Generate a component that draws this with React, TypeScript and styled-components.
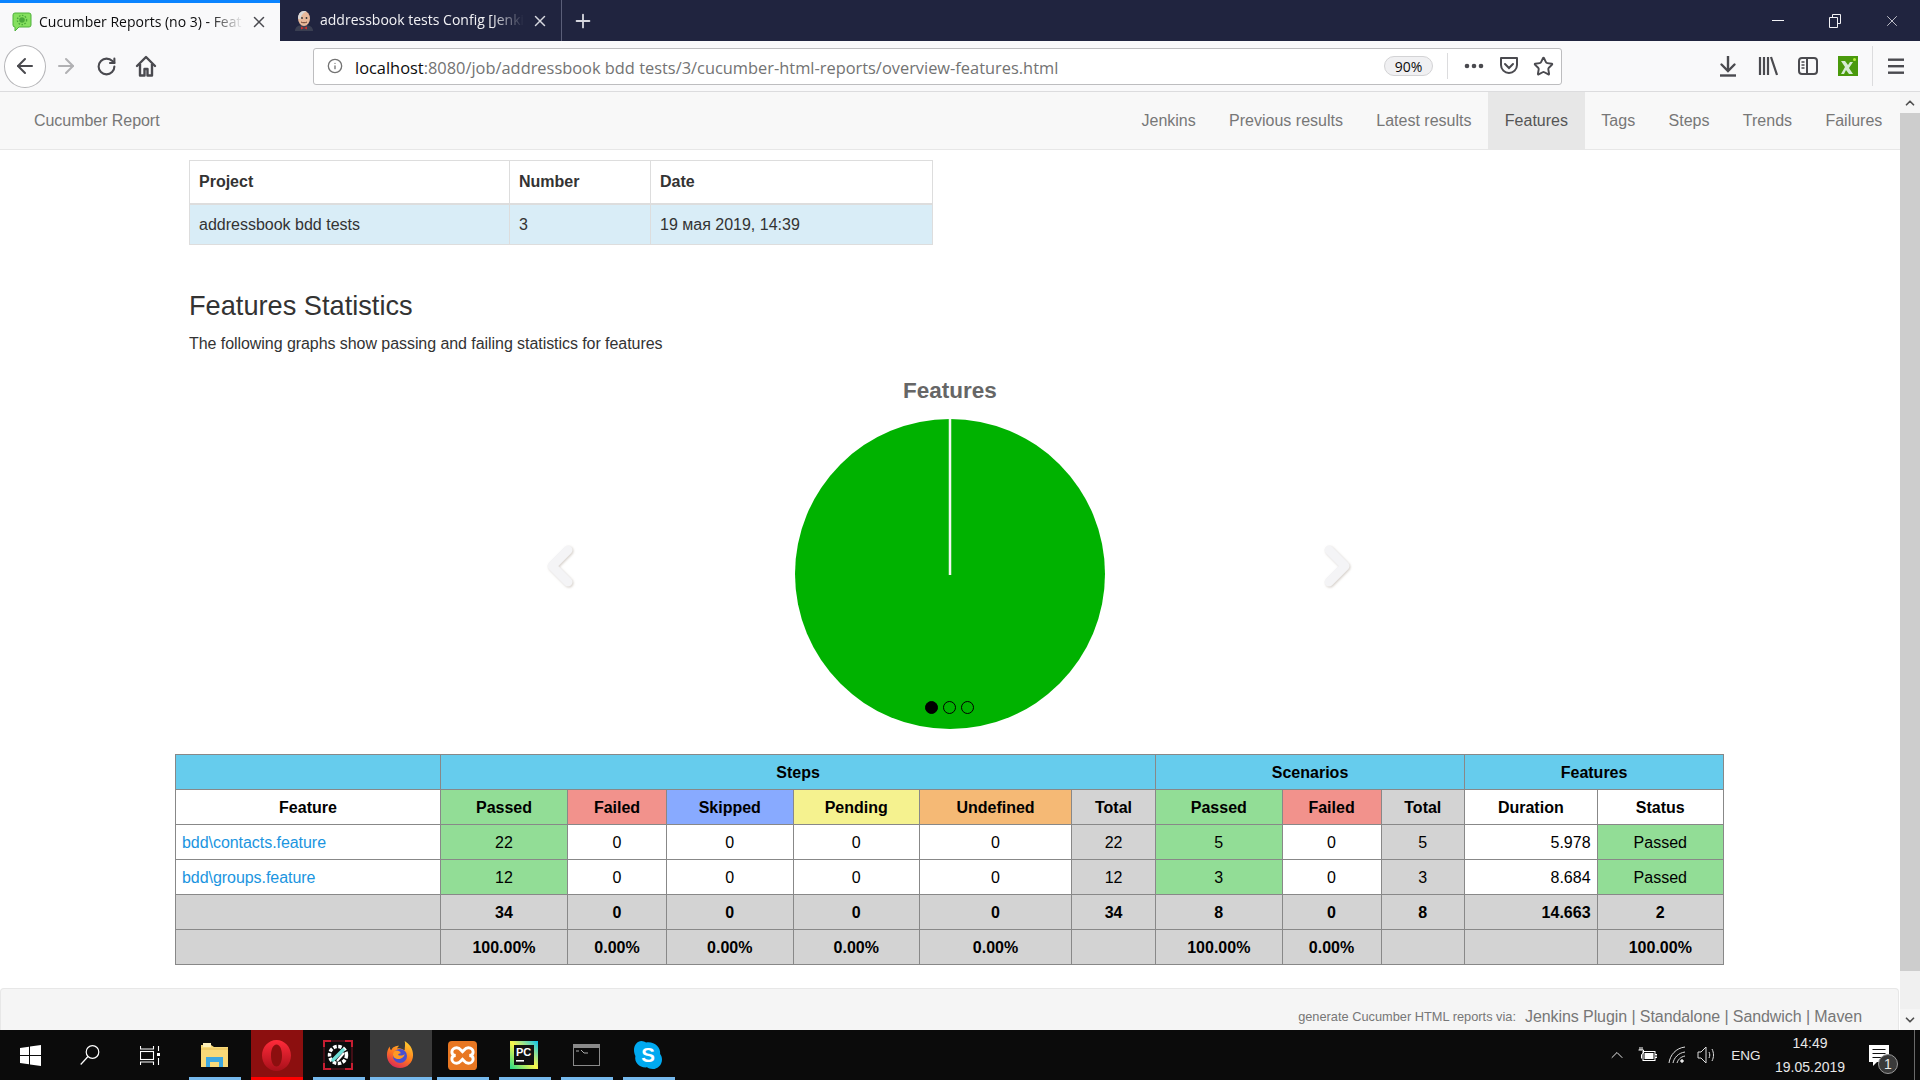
import React from "react";
import styled, { createGlobalStyle } from "styled-components";
import { ArrowLeft, ArrowRight, RotateCw, Info, Star, X, Plus, ChevronUp, ChevronDown } from "lucide-react";

const Global = createGlobalStyle`
  html, body { margin: 0; padding: 0; height: 100%; overflow: hidden; background: #fff; }
  body { font-family: "Liberation Sans", Arial, sans-serif; font-size: 16px; color: #333; }
  * { box-sizing: border-box; }
`;

const UI_FONT = `"Open Sans", "Noto Sans", sans-serif`;

const Screen = styled.div`
  width: 1920px;
  height: 1080px;
  display: flex;
  flex-direction: column;
  overflow: hidden;
`;

/* browser chrome */
const TabBar = styled.div`
  height: 41px;
  background: #20243f;
  display: flex;
  align-items: stretch;
  flex-shrink: 0;
`;

const Tab = styled.div<{ $active?: boolean }>`
  width: ${(p) => (p.$active ? 280 : 282)}px;
  display: flex;
  align-items: center;
  padding-left: ${(p) => (p.$active ? 12 : 15)}px;
  padding-right: 12px;
  gap: 7px;
  background: ${(p) => (p.$active ? "#f9f9fa" : "transparent")};
  border-top: ${(p) => (p.$active ? "3px solid #0a84ff" : "none")};
  border-right: ${(p) => (p.$active ? "none" : "1px solid #5a5e78")};
  color: ${(p) => (p.$active ? "#0c0c0d" : "#f2f2f5")};
  font-family: ${UI_FONT};
  font-size: 14px;
`;

const TabTitle = styled.span`
  flex: 1;
  white-space: nowrap;
  overflow: hidden;
  padding-bottom: 2px;
  mask-image: linear-gradient(to right, #000 84%, transparent 100%);
`;

const NewTab = styled.div`
  width: 42px;
  display: flex;
  align-items: center;
  justify-content: center;
  color: #d6d7df;
`;

const WindowControls = styled.div`
  margin-left: auto;
  display: flex;
  align-items: center;
  color: #f2f2f5;
`;

const WindowButton = styled.div`
  width: 57px;
  display: flex;
  justify-content: center;
  align-items: center;
`;

const Toolbar = styled.div`
  height: 51px;
  background: #f9f9fa;
  border-bottom: 1px solid #dcdcde;
  display: flex;
  align-items: center;
  padding-left: 4px;
  flex-shrink: 0;
`;

const BackButton = styled.div`
  width: 42px;
  height: 43px;
  border-radius: 50%;
  background: #fff;
  border: 1px solid #b5b5b8;
  display: flex;
  align-items: center;
  justify-content: center;
  color: #4a4a4f;
`;

const ToolSlot = styled.div<{ $dim?: boolean }>`
  width: 40px;
  display: flex;
  align-items: center;
  justify-content: center;
  color: ${(p) => (p.$dim ? "#b1b1b3" : "#4a4a4f")};
`;

const UrlBar = styled.div`
  width: 1249px;
  height: 37px;
  margin-left: 147px;
  margin-right: 146px;
  background: #fff;
  border: 1px solid #bdbdbf;
  border-radius: 3px;
  display: flex;
  align-items: center;
  padding-left: 13px;
  font-family: ${UI_FONT};
  font-size: 16.4px;
  color: #737373;
  flex-shrink: 0;
`;

const UrlText = styled.span`
  margin-left: 12px;
  padding-top: 2px;
  white-space: nowrap;
  b {
    font-weight: 400;
    color: #0c0c0d;
  }
`;

const ZoomPill = styled.span`
  margin-left: auto;
  width: 49px;
  height: 20px;
  border: 1px solid #d3d3d5;
  border-radius: 10px;
  background: #f0f0f2;
  color: #0c0c0d;
  font-size: 14px;
  display: flex;
  align-items: center;
  justify-content: center;
`;

const UrlDivider = styled.span`
  width: 1px;
  height: 26px;
  background: #dcdcde;
  margin: 0 8px 0 14px;
`;

const UrlAction = styled.span`
  width: 35px;
  display: flex;
  justify-content: center;
  color: #4a4a4f;
`;

const ToolDivider = styled.span`
  width: 1px;
  height: 40px;
  background: #dcdcde;
  margin: 0 3px 0 4px;
`;

const Viewport = styled.div`
  flex: 1;
  display: flex;
  min-height: 0;
`;

/* report page */
const Page = styled.div`
  flex: 1;
  display: flex;
  flex-direction: column;
  min-width: 0;
`;

const Navbar = styled.nav`
  height: 58px;
  background: #f8f8f8;
  border-bottom: 1px solid #e7e7e7;
  display: flex;
  align-items: stretch;
  padding-left: 34px;
  padding-right: 1px;
  flex-shrink: 0;
`;

const Brand = styled.div`
  color: #777;
  display: flex;
  align-items: center;
  margin-right: auto;
  letter-spacing: -0.05px;
`;

const NavItem = styled.div<{ $active?: boolean }>`
  padding: 0 16.7px;
  display: flex;
  align-items: center;
  color: ${(p) => (p.$active ? "#555" : "#777")};
  background: ${(p) => (p.$active ? "#e7e7e7" : "transparent")};
`;

const Main = styled.main`
  width: 1549px;
  margin-left: 175px;
  padding-top: 10px;
`;

const ProjectTable = styled.table`
  width: 743px;
  margin-left: 14px;
  border-collapse: collapse;
  table-layout: fixed;
`;

const ProjectHead = styled.th`
  height: 43px;
  padding: 0 9px;
  text-align: left;
  border: 1px solid #ddd;
  border-bottom-width: 2px;
  color: #333;
`;

const ProjectCell = styled.td`
  height: 41px;
  padding: 1px 9px 0;
  border: 1px solid #ddd;
  background: #d9edf7;
`;

const Heading = styled.h2`
  margin: 46px 0 12px 14px;
  font-size: 27.2px;
  font-weight: 400;
  line-height: 30px;
  color: #333;
`;

const Lead = styled.p`
  margin: 0 0 0 14px;
  line-height: 22px;
  letter-spacing: -0.06px;
`;

const Carousel = styled.div`
  position: relative;
  margin-top: 20px;
  padding-left: 1px;
  display: flex;
  flex-direction: column;
  align-items: center;
`;

const ChartTitle = styled.div`
  height: 30px;
  line-height: 32px;
  font-size: 22.5px;
  font-weight: 700;
  color: #666;
  margin-bottom: 14px;
`;

const Arrow = styled.svg<{ $side: "left" | "right" }>`
  position: absolute;
  top: 170px;
  left: ${(p) => (p.$side === "left" ? 371 : 1148)}px;
  filter: drop-shadow(1px 1px 1px rgba(120, 100, 80, 0.3));
`;

const Dots = styled.div`
  position: absolute;
  top: 326px;
  left: 0;
  right: 0;
  display: flex;
  justify-content: center;
  gap: 5px;
`;

const Dot = styled.span<{ $on?: boolean }>`
  width: 13px;
  height: 13px;
  border-radius: 50%;
  border: 1px solid #000;
  background: ${(p) => (p.$on ? "#000" : "transparent")};
`;

const StatsTable = styled.table`
  width: 1548px;
  margin-top: 25px;
  border-collapse: collapse;
  table-layout: fixed;
`;

const Col = styled.col<{ $w: number }>`
  width: ${(p) => p.$w}px;
`;

const Cell = styled.td<{ $bg?: string; $bold?: boolean; $align?: string }>`
  height: 35px;
  padding: 1px 6px 0;
  border: 1px solid #888;
  color: #000;
  background: ${(p) => p.$bg || "#fff"};
  font-weight: ${(p) => (p.$bold ? 700 : 400)};
  text-align: ${(p) => p.$align || "center"};
`;

const FeatureLink = styled.a`
  color: #1b95e0;
  letter-spacing: -0.05px;
`;

const Footer = styled.footer`
  margin-top: auto;
  height: 42px;
  background: #f5f5f5;
  border: 1px solid #e7e7e7;
  border-bottom: none;
  border-radius: 4px 4px 0 0;
  margin-right: 1px;
  display: flex;
  align-items: center;
  justify-content: flex-end;
  padding: 14px 36px 0 0;
  color: #777;
  letter-spacing: -0.08px;
`;

const FooterNote = styled.span`
  font-size: 12.8px;
  margin-right: 9px;
  letter-spacing: 0;
`;

const Scrollbar = styled.div`
  width: 20px;
  background: #f0f0f0;
  display: flex;
  flex-direction: column;
  align-items: center;
  flex-shrink: 0;
`;

const ScrollButton = styled.div`
  height: 21px;
  width: 100%;
  display: flex;
  align-items: center;
  justify-content: center;
  background: #f5f5f5;
  color: #505050;
`;

const ScrollThumb = styled.div`
  width: 100%;
  height: 858px;
  background: #cdcdcd;
`;

const ScrollGap = styled.div`
  flex: 1;
`;

/* taskbar */
const Taskbar = styled.div`
  height: 50px;
  background: #0b0b0b;
  display: flex;
  align-items: stretch;
  flex-shrink: 0;
  color: #fff;
`;

const SystemButtons = styled.div`
  display: flex;
  padding-right: 4px;
`;

const SystemButton = styled.div`
  width: 60px;
  display: flex;
  align-items: center;
  justify-content: center;
`;

const TaskSlot = styled.div<{ $state: "open" | "focus" | "current" }>`
  position: relative;
  width: 62px;
  display: flex;
  align-items: center;
  justify-content: center;
  flex-shrink: 0;
  &::before {
    content: "";
    position: absolute;
    top: 0;
    bottom: 0;
    left: ${(p) => (p.$state === "current" ? 0 : 5)}px;
    right: ${(p) => (p.$state === "current" ? 0 : 5)}px;
    background: ${(p) => (p.$state === "focus" ? "#8c0f0f" : p.$state === "current" ? "#3a3a3a" : "transparent")};
  }
  &::after {
    content: "";
    position: absolute;
    bottom: 0;
    height: 3px;
    left: ${(p) => (p.$state === "current" ? 0 : 5)}px;
    right: ${(p) => (p.$state === "current" ? 0 : 5)}px;
    background: ${(p) => (p.$state === "focus" ? "#f00" : "#76b9ed")};
  }
  svg {
    position: relative;
    left: -1px;
  }
`;

const Tray = styled.div`
  margin-left: auto;
  display: flex;
  align-items: center;
  font-size: 13.5px;
  color: #e8e8e8;
  padding-right: 5px;
`;

const TrayIcon = styled.div`
  width: 30px;
  display: flex;
  justify-content: center;
`;

const TrayLang = styled.div`
  width: 45px;
  padding-left: 3px;
  text-align: center;
`;

const Clock = styled.div`
  width: 84px;
  margin-left: 1px;
  text-align: center;
  font-size: 14px;
  line-height: 24px;
`;

const Notify = styled.div`
  position: relative;
  width: 63px;
  height: 50px;
  border-right: 1px solid #6a6a6a;
  padding: 15px 0 0 17px;
`;

const NotifyBadge = styled.span`
  position: absolute;
  left: 26px;
  top: 24px;
  width: 20px;
  height: 20px;
  border-radius: 50%;
  background: #3a3a3a;
  border: 1px solid #999;
  font-size: 14px;
  display: flex;
  align-items: center;
  justify-content: center;
`;

/* drawings */
const CucumberIcon = () => (
  <svg width="20" height="20" viewBox="0 0 20 20">
    <path d="M3 1h14a2 2 0 0 1 2 2v10a2 2 0 0 1-2 2H7l-4 4v-4H3a2 2 0 0 1-2-2V3a2 2 0 0 1 2-2z" fill="#86e05f" stroke="#4fb23a" />
    <circle cx="10" cy="8" r="2.8" fill="#4aa83a" />
    <circle cx="10" cy="8" r="4.6" fill="none" stroke="#4aa83a" strokeWidth="1.4" strokeDasharray="1.6 1.4" />
  </svg>
);

const JenkinsIcon = () => (
  <svg width="18" height="20" viewBox="0 0 18 20">
    <path d="M0 20c0-4 3-6 9-6s9 2 9 6z" fill="#3a3f52" />
    <path d="M6 15.5l3 1.5 3-1.500v3l-3-1.500-3 1.500z" fill="#d0302c" />
    <ellipse cx="9" cy="7.500" rx="6" ry="7.500" fill="#e8b89a" />
    <path d="M3 7.500C3 3 5.500 0 9 0c1.500 0 2.500.5 2.500.5C8.500 1.500 6 4 5.500 8.500z" fill="#d8d8d8" />
    <path d="M6 11c1.500 1 4.500 1 6 0" stroke="#6a4030" fill="none" />
    <circle cx="7" cy="7" r=".9" fill="#333" />
    <circle cx="11.500" cy="7" r=".9" fill="#333" />
  </svg>
);

const HomeIcon = () => (
  <svg width="22" height="24" viewBox="0 0 22 24" fill="none" stroke="#4a4a4f" strokeWidth="2.4" strokeLinejoin="round">
    <path d="M2 12L11 3l9 9" strokeLinecap="round" />
    <path d="M5 10v11.500h4.500V15h3v6.500H17V10" />
  </svg>
);

const RestoreIcon = () => (
  <svg width="12" height="14" viewBox="0 0 12 14" fill="none" stroke="#f2f2f5">
    <path d="M3.500 3.500V.5h8v9H8.500" />
    <path d="M.5 3.500h8v10h-8z" />
  </svg>
);

const MoreIcon = () => (
  <svg width="20" height="6" viewBox="0 0 20 6" fill="#4a4a4f">
    <circle cx="3" cy="3" r="2.300" />
    <circle cx="10" cy="3" r="2.300" />
    <circle cx="17" cy="3" r="2.300" />
  </svg>
);

const PocketIcon = () => (
  <svg width="20" height="20" viewBox="0 0 20 20" fill="none" stroke="#4a4a4f" strokeWidth="2">
    <path d="M2 2h16v7a8 8 0 0 1-16 0z" strokeLinejoin="round" />
    <path d="M6 8l4 4 4-4" strokeLinecap="round" />
  </svg>
);

const DownloadIcon = () => (
  <svg width="18" height="22" viewBox="0 0 18 22" fill="none" stroke="#4a4a4f" strokeWidth="2.400">
    <path d="M9 1v14" />
    <path d="M2.500 9.500L9 16l6.500-6.500" strokeLinecap="round" />
    <path d="M1 20.500h16" />
  </svg>
);

const LibraryIcon = () => (
  <svg width="20" height="20" viewBox="0 0 20 20" stroke="#4a4a4f" strokeWidth="2.200" fill="none">
    <path d="M2 1v18M6 1v18M10 1v18M13 1l6 18" />
  </svg>
);

const SidebarIcon = () => (
  <svg width="20" height="20" viewBox="0 0 20 20" fill="none" stroke="#4a4a4f" strokeWidth="2">
    <rect x="1" y="2" width="18" height="16" rx="3" />
    <path d="M9 2v16" />
    <path d="M3.500 6h3M3.500 9h3M3.500 12h3" strokeWidth="1.400" />
  </svg>
);

const ExcelIcon = () => (
  <svg width="20" height="20" viewBox="0 0 20 20">
    <rect width="20" height="20" fill="#4a9a0c" />
    <path d="M3 5h4l3 4 2-3h3l-4 6 4 6h-4l-3-4-2 4H3l4-7z" fill="#d6ebd4" />
    <circle cx="16.500" cy="3.500" r="1.500" fill="#b6f03a" />
  </svg>
);

const BurgerIcon = () => (
  <svg width="16" height="16" viewBox="0 0 16 16" fill="#4a4a4f">
    <rect y="0.500" width="16" height="2.400" />
    <rect y="7" width="16" height="2.400" />
    <rect y="13.500" width="16" height="2.400" />
  </svg>
);

const PieChart = () => (
  <svg width="310" height="310" viewBox="0 0 310 310">
    <circle cx="155" cy="155" r="155" fill="#00b200" />
    <line x1="155" y1="0" x2="155" y2="156" stroke="#f2f8f0" strokeWidth="2.500" />
  </svg>
);

const Chevron = ({ side }: { side: "left" | "right" }) => (
  <Arrow $side={side} width="28" height="42" viewBox="0 0 28 42">
    <polyline
      points={side === "left" ? "22,5 6,21 22,37" : "6,5 22,21 6,37"}
      fill="none"
      stroke="#f4f4f6"
      strokeWidth="9"
      strokeLinecap="round"
      strokeLinejoin="round"
    />
  </Arrow>
);

const WindowsLogo = () => (
  <svg width="21" height="21" viewBox="0 0 21 21" fill="#fff">
    <path d="M0 3l9-1.300V10H0zM10 1.500L21 0v10H10zM0 11h9v8.300L0 18zM10 11h11v10l-11-1.500z" />
  </svg>
);

const SearchGlyph = () => (
  <svg width="20" height="20" viewBox="0 0 20 20" fill="none" stroke="#fff" strokeWidth="1.200">
    <circle cx="12.500" cy="7" r="6.300" />
    <path d="M8 11.500L.7 19.500" />
  </svg>
);

const TaskViewGlyph = () => (
  <svg width="20" height="19" viewBox="0 0 20 19" fill="none" stroke="#fff" strokeWidth="1.100">
    <path d="M.5 0v3h13V0M.5 19v-3h13v3" />
    <rect x=".5" y="5.500" width="13" height="8" />
    <rect x="17" y="7" width="3" height="3" fill="#fff" stroke="none" />
    <path d="M18.500 0v5M18.500 12v7" />
  </svg>
);

const ExplorerLogo = () => (
  <svg width="27" height="24" viewBox="0 0 27 24">
    <path d="M0 2h10l3 2h14v20H0z" fill="#f8d978" />
    <rect x="2" y="0" width="8" height="4" fill="#fdf0b8" />
    <path d="M0 6h27" stroke="#e8bf58" />
    <path d="M5 24V14h17v10h-4v-5H9v5z" fill="#3ea8e0" />
  </svg>
);

const OperaLogo = () => (
  <svg width="29" height="31" viewBox="0 0 29 31">
    <defs>
      <linearGradient id="op" x1="0" y1="0" x2="0" y2="1">
        <stop offset="0" stopColor="#ff2b3a" />
        <stop offset="1" stopColor="#a8101a" />
      </linearGradient>
    </defs>
    <path
      fillRule="evenodd"
      fill="url(#op)"
      d="M14.500 0C22.500 0 29 7 29 15.500S22.500 31 14.500 31 0 24 0 15.500 6.500 0 14.500 0zm0 4.500c-3.500 0-5.500 5-5.500 11s2 11 5.500 11 5.500-5 5.500-11-2-11-5.500-11z"
    />
  </svg>
);

const PortableLogo = () => (
  <svg width="30" height="30" viewBox="0 0 30 30" fill="none">
    <path d="M1 7V1h7M22 1h7v6M29 23v6h-7M8 29H1v-6" stroke="#c81e32" strokeWidth="2" />
    <path d="M1 7v16M29 7v16M8 1h14M8 29h14" stroke="#7a1422" strokeWidth="1" />
    <circle cx="15" cy="15" r="8.500" stroke="#fff" strokeWidth="3.500" strokeDasharray="3.500 1.500" />
    <path d="M10 20L20 10" stroke="#6fe0d8" strokeWidth="3.500" strokeLinecap="round" />
    <path d="M14 21l7-8" stroke="#fff" strokeWidth="2" />
  </svg>
);

const FirefoxLogo = () => (
  <svg width="28" height="28" viewBox="0 0 30 30">
    <defs>
      <linearGradient id="ff" x1="0.7" y1="0" x2="0.2" y2="1">
        <stop offset="0" stopColor="#ffcb2e" />
        <stop offset="0.5" stopColor="#ff7a1e" />
        <stop offset="1" stopColor="#d8205c" />
      </linearGradient>
    </defs>
    <path d="M20 0c5 3 9 8 9 15 0 8-6.300 14-14 14S1 23 1 15C1 11 2.500 8 4 6c0 2 .5 3 1.500 4C7 6 11 5 14 5c-1 1-2 2-2 3 3-1 6 1 8 2 0-3 1-7 0-10z" fill="url(#ff)" />
    <circle cx="15" cy="16" r="7.500" fill="#4a4fd0" />
    <path d="M9 11c3-2 6 0 7 2-2 0-3 1-3 2 2 1 5 1 7-1-1 5-7 7-11 4-2-2-2-5 0-7z" fill="#ff9a24" />
  </svg>
);

const XamppLogo = () => (
  <svg width="29" height="29" viewBox="0 0 30 30">
    <rect width="30" height="30" rx="4" fill="#e87722" />
    <path
      d="M9 7c-3 0-5 2-5 4.500S6 15 8 15c-2 0-4 1-4 3.500S6 23 9 23s4-2 6-4c2 2 3 4 6 4s5-2 5-4.500-2-3.500-4-3.500c2 0 4-1 4-3.500S24 7 21 7s-4 2-6 4c-2-2-3-4-6-4z"
      fill="none"
      stroke="#fff"
      strokeWidth="3"
    />
  </svg>
);

const PyCharmLogo = () => (
  <svg width="28" height="28" viewBox="0 0 28 28">
    <defs>
      <linearGradient id="pc" x1="0" y1="1" x2="1" y2="0">
        <stop offset="0" stopColor="#21d789" />
        <stop offset="0.5" stopColor="#fcf84a" />
        <stop offset="1" stopColor="#07c3f2" />
      </linearGradient>
    </defs>
    <rect width="28" height="28" fill="url(#pc)" />
    <rect x="4" y="4" width="20" height="20" fill="#111" />
    <text x="6" y="15" fontSize="11" fontWeight="700" fill="#fff" fontFamily="Liberation Sans">PC</text>
    <rect x="6" y="19" width="8" height="1.600" fill="#fff" />
  </svg>
);

const TerminalLogo = () => (
  <svg width="27" height="22" viewBox="0 0 27 22">
    <rect x=".5" y=".5" width="26" height="21" fill="#0a0a0a" stroke="#8a8a8a" />
    <rect x="1" y="1" width="25" height="3" fill="#8a8a8a" />
    <path d="M3 7h3M8 6l3 3h4" stroke="#aaa" strokeWidth="1" fill="none" />
  </svg>
);

const SkypeLogo = () => (
  <svg width="28" height="28" viewBox="0 0 30 30">
    <path d="M8 0c2 0 3.500.8 5 1.500C21 0 29 6 28 14c1.300 2 2 3.500 2 6 0 5.500-4.500 10-10 10-2.500 0-4.500-.8-6-1.800C6 29 0 23 1.500 16 .5 14 0 12 0 9.500 0 4.500 3.500 0 8 0z" fill="#00a9f0" />
    <text x="15" y="23" textAnchor="middle" fontSize="22" fontWeight="700" fill="#fff" fontFamily="Liberation Sans">S</text>
  </svg>
);

const BatteryGlyph = () => (
  <svg width="20" height="16" viewBox="0 0 20 16" fill="none" stroke="#fff">
    <rect x="6" y="4.500" width="12" height="9" />
    <rect x="8" y="6.500" width="8" height="5" fill="#fff" />
    <path d="M18 7.500h2v3h-2M3 0v3M5 0v3M1.500 3h5v3l-2 1.500v4" />
  </svg>
);

const WifiGlyph = () => (
  <svg width="18" height="18" viewBox="0 0 18 18" fill="none" stroke="#ddd" strokeWidth="1">
    <path d="M1 17C2 9 8 2 17 1M5 17c1-5 5-10 12-11M9 17c1-3 3-6 8-7" />
    <circle cx="14" cy="15" r="1.300" fill="#fff" />
  </svg>
);

const VolumeGlyph = () => (
  <svg width="20" height="20" viewBox="0 0 20 20" fill="none" stroke="#ddd">
    <path d="M1 7h3l5-5v16l-5-5H1z" />
    <path d="M12 7c1 2 1 4 0 6M15 4c2 4 2 8 0 12" />
  </svg>
);

const ChatGlyph = () => (
  <svg width="20" height="22" viewBox="0 0 20 22">
    <path d="M0 0h20v17H8l-4 4v-4H0z" fill="#fff" />
    <path d="M3.500 4.500h13M3.500 8.500h13M3.500 12.500h10" stroke="#111" strokeWidth="1.200" />
  </svg>
);

const navLinks = ["Jenkins", "Previous results", "Latest results", "Features", "Tags", "Steps", "Trends", "Failures"];
const colWidths = [265, 127, 99, 126.5, 126.5, 152, 84, 126.5, 99, 83.5, 132.5, 126.5];

const GREEN = "#92dd96";
const RED = "#f2928c";
const GRAY = "#d3d3d3";
const BLUE = "#66cced";

const rows = [
  { name: "bdd\\contacts.feature", steps: 22, scenarios: 5, duration: "5.978" },
  { name: "bdd\\groups.feature", steps: 12, scenarios: 3, duration: "8.684" },
];

const tasks: { logo: React.ReactNode; state: "open" | "focus" | "current" }[] = [
  { logo: <ExplorerLogo />, state: "open" },
  { logo: <OperaLogo />, state: "focus" },
  { logo: <PortableLogo />, state: "open" },
  { logo: <FirefoxLogo />, state: "current" },
  { logo: <XamppLogo />, state: "open" },
  { logo: <PyCharmLogo />, state: "open" },
  { logo: <TerminalLogo />, state: "open" },
  { logo: <SkypeLogo />, state: "open" },
];

function StatsGrid() {
  return (
    <StatsTable>
      <colgroup>
        {colWidths.map((w, i) => (
          <Col key={i} $w={w} />
        ))}
      </colgroup>
      <tbody>
        <tr>
          <Cell $bg={BLUE} />
          <Cell as="th" $bg={BLUE} $bold colSpan={6}>Steps</Cell>
          <Cell as="th" $bg={BLUE} $bold colSpan={3}>Scenarios</Cell>
          <Cell as="th" $bg={BLUE} $bold colSpan={2}>Features</Cell>
        </tr>
        <tr>
          <Cell as="th" $bold>Feature</Cell>
          <Cell as="th" $bold $bg={GREEN}>Passed</Cell>
          <Cell as="th" $bold $bg={RED}>Failed</Cell>
          <Cell as="th" $bold $bg="#88aaff">Skipped</Cell>
          <Cell as="th" $bold $bg="#f5f28f">Pending</Cell>
          <Cell as="th" $bold $bg="#f5b975">Undefined</Cell>
          <Cell as="th" $bold $bg={GRAY}>Total</Cell>
          <Cell as="th" $bold $bg={GREEN}>Passed</Cell>
          <Cell as="th" $bold $bg={RED}>Failed</Cell>
          <Cell as="th" $bold $bg={GRAY}>Total</Cell>
          <Cell as="th" $bold>Duration</Cell>
          <Cell as="th" $bold>Status</Cell>
        </tr>
        {rows.map((r) => (
          <tr key={r.name}>
            <Cell $align="left"><FeatureLink>{r.name}</FeatureLink></Cell>
            <Cell $bg={GREEN}>{r.steps}</Cell>
            <Cell>0</Cell>
            <Cell>0</Cell>
            <Cell>0</Cell>
            <Cell>0</Cell>
            <Cell $bg={GRAY}>{r.steps}</Cell>
            <Cell $bg={GREEN}>{r.scenarios}</Cell>
            <Cell>0</Cell>
            <Cell $bg={GRAY}>{r.scenarios}</Cell>
            <Cell $align="right">{r.duration}</Cell>
            <Cell $bg={GREEN}>Passed</Cell>
          </tr>
        ))}
        <tr>
          {["", "34", "0", "0", "0", "0", "34", "8", "0", "8", "14.663", "2"].map((v, i) => (
            <Cell key={i} $bg={GRAY} $bold $align={i === 10 ? "right" : "center"}>{v}</Cell>
          ))}
        </tr>
        <tr>
          {["", "100.00%", "0.00%", "0.00%", "0.00%", "0.00%", "", "100.00%", "0.00%", "", "", "100.00%"].map((v, i) => (
            <Cell key={i} $bg={GRAY} $bold>{v}</Cell>
          ))}
        </tr>
      </tbody>
    </StatsTable>
  );
}

export default function App() {
  return (
    <Screen>
      <Global />
      <TabBar>
        <Tab $active>
          <CucumberIcon />
          <TabTitle>Cucumber Reports (no 3) - Feat</TabTitle>
          <X size={18} color="#4a4a4f" />
        </Tab>
        <Tab>
          <JenkinsIcon />
          <TabTitle>addressbook tests Config [Jenki</TabTitle>
          <X size={18} color="#d6d7df" />
        </Tab>
        <NewTab>
          <Plus size={22} />
        </NewTab>
        <WindowControls>
          <WindowButton>
            <svg width="12" height="2" viewBox="0 0 12 2"><rect width="12" height="1" fill="#f2f2f5" /></svg>
          </WindowButton>
          <WindowButton><RestoreIcon /></WindowButton>
          <WindowButton><X size={18} strokeWidth={1} /></WindowButton>
        </WindowControls>
      </TabBar>
      <Toolbar>
        <BackButton><ArrowLeft size={24} /></BackButton>
        <ToolSlot $dim><ArrowRight size={24} /></ToolSlot>
        <ToolSlot><RotateCw size={21} strokeWidth={2.4} /></ToolSlot>
        <ToolSlot><HomeIcon /></ToolSlot>
        <UrlBar>
          <Info size={16} />
          <UrlText>
            <b>localhost</b>:8080/job/addressbook bdd tests/3/cucumber-html-reports/overview-features.html
          </UrlText>
          <ZoomPill>90%</ZoomPill>
          <UrlDivider />
          <UrlAction><MoreIcon /></UrlAction>
          <UrlAction><PocketIcon /></UrlAction>
          <UrlAction><Star size={21} strokeWidth={2.2} /></UrlAction>
        </UrlBar>
        <ToolSlot><DownloadIcon /></ToolSlot>
        <ToolSlot><LibraryIcon /></ToolSlot>
        <ToolSlot><SidebarIcon /></ToolSlot>
        <ToolSlot><ExcelIcon /></ToolSlot>
        <ToolDivider />
        <ToolSlot><BurgerIcon /></ToolSlot>
      </Toolbar>
      <Viewport>
        <Page>
          <Navbar>
            <Brand>Cucumber Report</Brand>
            {navLinks.map((l) => (
              <NavItem key={l} $active={l === "Features"}>{l}</NavItem>
            ))}
          </Navbar>
          <Main>
            <ProjectTable>
              <colgroup>
                <Col $w={320} />
                <Col $w={141} />
                <Col $w={282} />
              </colgroup>
              <tbody>
                <tr>
                  <ProjectHead>Project</ProjectHead>
                  <ProjectHead>Number</ProjectHead>
                  <ProjectHead>Date</ProjectHead>
                </tr>
                <tr>
                  <ProjectCell>addressbook bdd tests</ProjectCell>
                  <ProjectCell>3</ProjectCell>
                  <ProjectCell>19 мая 2019, 14:39</ProjectCell>
                </tr>
              </tbody>
            </ProjectTable>
            <Heading>Features Statistics</Heading>
            <Lead>The following graphs show passing and failing statistics for features</Lead>
            <Carousel>
              <ChartTitle>Features</ChartTitle>
              <PieChart />
              <Chevron side="left" />
              <Chevron side="right" />
              <Dots>
                <Dot $on />
                <Dot />
                <Dot />
              </Dots>
            </Carousel>
            <StatsGrid />
          </Main>
          <Footer>
            <FooterNote>generate Cucumber HTML reports via:</FooterNote>
            Jenkins Plugin | Standalone | Sandwich | Maven
          </Footer>
        </Page>
        <Scrollbar>
          <ScrollButton><ChevronUp size={14} strokeWidth={3} /></ScrollButton>
          <ScrollThumb />
          <ScrollGap />
          <ScrollButton><ChevronDown size={14} strokeWidth={3} /></ScrollButton>
        </Scrollbar>
      </Viewport>
      <Taskbar>
        <SystemButtons>
          <SystemButton><WindowsLogo /></SystemButton>
          <SystemButton><SearchGlyph /></SystemButton>
          <SystemButton><TaskViewGlyph /></SystemButton>
        </SystemButtons>
        {tasks.map((t, i) => (
          <TaskSlot key={i} $state={t.state}>{t.logo}</TaskSlot>
        ))}
        <Tray>
          <TrayIcon><ChevronUp size={20} strokeWidth={1.2} /></TrayIcon>
          <TrayIcon><BatteryGlyph /></TrayIcon>
          <TrayIcon><WifiGlyph /></TrayIcon>
          <TrayIcon><VolumeGlyph /></TrayIcon>
          <TrayLang>ENG</TrayLang>
          <Clock>14:49<br />19.05.2019</Clock>
          <Notify>
            <ChatGlyph />
            <NotifyBadge>1</NotifyBadge>
          </Notify>
        </Tray>
      </Taskbar>
    </Screen>
  );
}
